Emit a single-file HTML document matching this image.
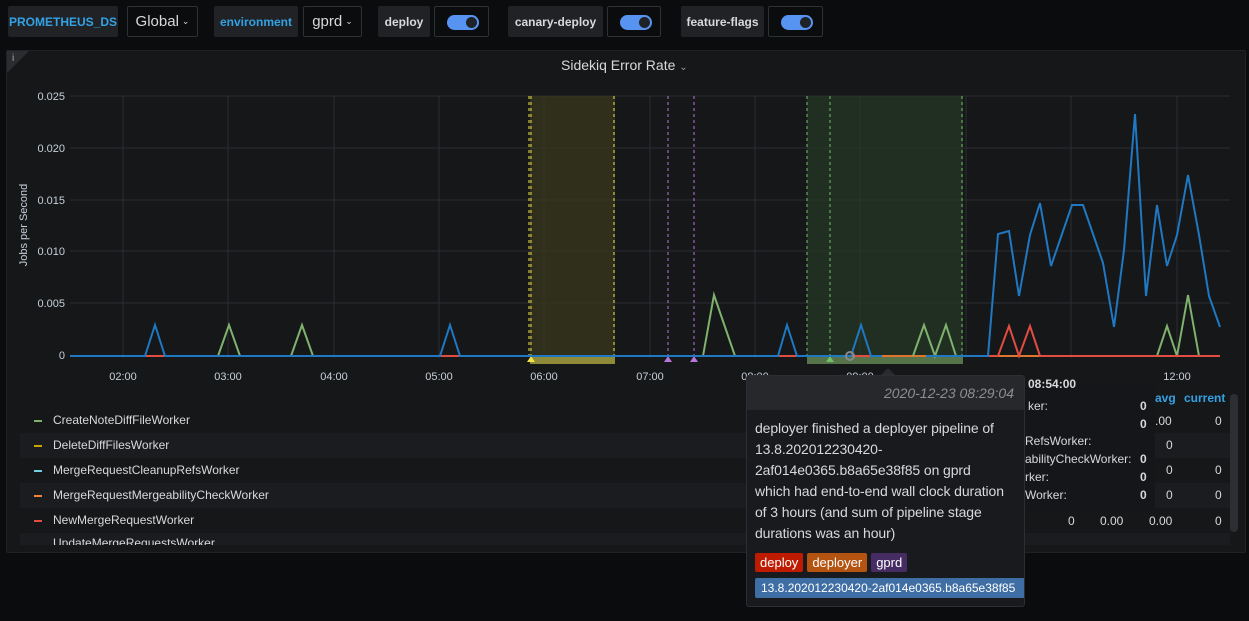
<!DOCTYPE html>
<html><head><meta charset="utf-8"><style>
*{margin:0;padding:0;box-sizing:border-box}
body{width:1249px;height:621px;background:#0b0c0e;font-family:"Liberation Sans",sans-serif;color:#d8d9da;position:relative;overflow:hidden}
.a{position:absolute}
.lbl{background:#202226;border-radius:2px;font-size:13px;display:flex;align-items:center;justify-content:center;height:31px;top:6px}
.dd{border:1px solid #2c3235;border-radius:2px;background:#0b0c0e;font-size:15px;display:flex;align-items:center;justify-content:center;height:31px;top:6px;color:#d8d9da}
.tg{border:1px solid #2c3235;border-radius:2px;background:#0b0c0e;height:31px;top:6px}
.tg i{position:absolute;left:12px;top:8px;width:32px;height:15px;border-radius:8px;background:#5794f2}
.tg i:after{content:"";position:absolute;right:2px;top:2px;width:11px;height:11px;border-radius:50%;background:#1f2227}
.blue{color:#33a2e5}
.lg{font-size:12px;color:#d8d9da;left:20px;width:1210px;height:25px;line-height:25px;padding-left:33px}
.lg b{position:absolute;left:14px;top:12px;width:8px;height:2px}
.tag{display:inline-block;color:#fff;font-size:13px;padding:2px 5px;border-radius:2px;margin-right:4px}
</style></head><body>
<div class="a lbl blue" style="left:8px;width:110px;font-weight:bold;font-size:12px">PROMETHEUS_DS</div>
<div class="a dd" style="left:127px;width:71px">Global <span style="font-size:9px;margin-left:3px">⌄</span></div>
<div class="a lbl blue" style="left:214px;width:84px;font-weight:bold;font-size:12px">environment</div>
<div class="a dd" style="left:303px;width:59px">gprd <span style="font-size:9px;margin-left:3px">⌄</span></div>
<div class="a lbl" style="left:378px;width:52px;font-weight:bold;font-size:12px">deploy</div>
<div class="a tg" style="left:434px;width:55px"><i></i></div>
<div class="a lbl" style="left:508px;width:95px;font-weight:bold;font-size:12px">canary-deploy</div>
<div class="a tg" style="left:607px;width:54px"><i></i></div>
<div class="a lbl" style="left:681px;width:83px;font-weight:bold;font-size:12px">feature-flags</div>
<div class="a tg" style="left:768px;width:55px"><i></i></div>

<div class="a" style="left:6px;top:50px;width:1240px;height:503px;background:#161719;border:1px solid #202226;border-radius:2px"></div>
<div class="a" style="left:7px;top:51px;width:0;height:0;border-top:22px solid #2a2c30;border-right:22px solid transparent"></div>
<div class="a" style="left:12px;top:53px;font-size:10px;color:#aaa">i</div>
<div class="a" style="left:561px;top:57px;font-size:14px;color:#d8d9da">Sidekiq Error Rate <span style="font-size:10px;color:#999">⌄</span></div>

<svg class="a" style="left:0;top:0" width="1249" height="621" font-family="Liberation Sans" font-size="12" fill="#c7d0d9">
<g stroke="#2c2e33" stroke-width="1">
<line x1="70" y1="96" x2="1230" y2="96"/><line x1="70" y1="148" x2="1230" y2="148"/><line x1="70" y1="200" x2="1230" y2="200"/><line x1="70" y1="251" x2="1230" y2="251"/><line x1="70" y1="303" x2="1230" y2="303"/>
<line x1="123" y1="96" x2="123" y2="358"/><line x1="228" y1="96" x2="228" y2="358"/><line x1="334" y1="96" x2="334" y2="358"/><line x1="439" y1="96" x2="439" y2="358"/><line x1="544" y1="96" x2="544" y2="358"/><line x1="650" y1="96" x2="650" y2="358"/><line x1="755" y1="96" x2="755" y2="358"/><line x1="860" y1="96" x2="860" y2="358"/><line x1="966" y1="96" x2="966" y2="358"/><line x1="1071" y1="96" x2="1071" y2="358"/><line x1="1177" y1="96" x2="1177" y2="358"/>
</g>
<g text-anchor="end" font-size="11"><text x="65" y="100">0.025</text><text x="65" y="152">0.020</text><text x="65" y="204">0.015</text><text x="65" y="255">0.010</text><text x="65" y="307">0.005</text><text x="65" y="359">0</text></g>
<text x="27" y="225" font-size="11" transform="rotate(-90 27 225)" text-anchor="middle">Jobs per Second</text>
<g text-anchor="middle" font-size="11"><text x="123" y="380">02:00</text><text x="228" y="380">03:00</text><text x="334" y="380">04:00</text><text x="439" y="380">05:00</text><text x="544" y="380">06:00</text><text x="650" y="380">07:00</text><text x="755" y="380">08:00</text><text x="860" y="380">09:00</text><text x="1177" y="380">12:00</text></g>
<rect x="530" y="96" width="85" height="262" fill="#3a3a1e" opacity="0.7"/>
<rect x="530" y="356" width="85" height="8" fill="#8f8a38"/>
<rect x="807" y="96" width="156" height="262" fill="#263826" opacity="0.75"/>
<rect x="807" y="356" width="156" height="8" fill="#56734a"/>
<g stroke-dasharray="3,3" stroke-width="1">
<line x1="529" y1="96" x2="529" y2="356" stroke="#f2e34a"/><line x1="531" y1="96" x2="531" y2="356" stroke="#f2e34a"/><line x1="614" y1="96" x2="614" y2="356" stroke="#f2e34a"/>
<line x1="668" y1="96" x2="668" y2="356" stroke="#b877d9"/><line x1="694" y1="96" x2="694" y2="356" stroke="#b877d9"/>
<line x1="807" y1="96" x2="807" y2="356" stroke="#73bf69"/><line x1="830" y1="96" x2="830" y2="356" stroke="#73bf69"/><line x1="962" y1="96" x2="962" y2="356" stroke="#73bf69"/>
</g>
<polygon points="531,356 527,362 535,362" fill="#f2e34a"/>
<polygon points="668,356 664,362 672,362" fill="#b877d9"/><polygon points="694,356 690,362 698,362" fill="#b877d9"/>
<polygon points="830,356 826,362 834,362" fill="#73bf69"/>
<g fill="none" stroke-width="2" stroke-linejoin="miter">
<polyline stroke="#e0752d" points="70,356 1220,356"/>
<line x1="145" y1="356" x2="165" y2="356" stroke="#e24d42"/><line x1="440" y1="356" x2="460" y2="356" stroke="#e24d42"/><line x1="778" y1="356" x2="797" y2="356" stroke="#e24d42"/><line x1="855" y1="356" x2="870" y2="356" stroke="#e24d42"/>
<polyline stroke="#7eb26d" points="218,356 229,325 240,356"/>
<polyline stroke="#7eb26d" points="291,356 302,325 313,356"/>
<polyline stroke="#7eb26d" points="703,356 714,295 735,356"/>
<polyline stroke="#7eb26d" points="913,356 924,325 935,356 946,325 956,356"/>
<polyline stroke="#7eb26d" points="1157,356 1167,326 1177,356 1188,295 1199,356"/>
<polyline stroke="#e24d42" points="970,356 998,356 1009,326 1019,356 1030,326 1040,356 1220,356"/>
<polyline stroke="#1f78c1" points="70,356 145,356 155,325 165,356 440,356 450,325 460,356 778,356 787,325 797,356 851,356 861,325 871,356 882,356"/>
<polyline stroke="#1f78c1" points="926,356 988,356 998,234 1009,231 1019,296 1030,235 1040,203 1051,266 1072,205 1083,205 1103,263 1114,327 1124,250 1135,114 1146,296 1157,205 1167,266 1177,235 1188,175 1199,235 1209,296 1220,327"/>
</g>
<circle cx="850" cy="356" r="4" fill="none" stroke="#888" stroke-width="2"/>
</svg>

<div class="a lg" style="top:408px"><b style="background:#7eb26d"></b>CreateNoteDiffFileWorker</div>
<div class="a lg" style="top:433px;background:#1b1c20"><b style="background:#cca300"></b>DeleteDiffFilesWorker</div>
<div class="a lg" style="top:458px"><b style="background:#6ed0e0"></b>MergeRequestCleanupRefsWorker</div>
<div class="a lg" style="top:483px;background:#1b1c20"><b style="background:#ef843c"></b>MergeRequestMergeabilityCheckWorker</div>
<div class="a lg" style="top:508px"><b style="background:#e24d42"></b>NewMergeRequestWorker</div>
<div class="a lg" style="top:533px;height:12px;overflow:hidden;background:#1b1c20;line-height:20px">UpdateMergeRequestsWorker</div>

<div class="a" style="left:1230px;top:394px;width:8px;height:138px;background:#2c2e33;border-radius:4px"></div>
<div class="a" style="left:1015px;top:384px;width:140px;height:128px;background:#141619"></div>
<div class="a" style="left:1028px;top:377px;font-size:12px;font-weight:bold">08:54:00</div>
<div class="a" style="left:1028px;top:399px;font-size:12px">ker:</div><div class="a" style="left:1140px;top:399px;font-size:12px;font-weight:bold">0</div>
<div class="a" style="left:1140px;top:417px;font-size:12px;font-weight:bold">0</div>
<div class="a" style="left:1025px;top:434px;font-size:12px">RefsWorker:</div>
<div class="a" style="left:1025px;top:452px;font-size:12px">abilityCheckWorker:</div><div class="a" style="left:1140px;top:452px;font-size:12px;font-weight:bold">0</div>
<div class="a" style="left:1025px;top:470px;font-size:12px">rker:</div><div class="a" style="left:1140px;top:470px;font-size:12px;font-weight:bold">0</div>
<div class="a" style="left:1025px;top:488px;font-size:12px">Worker:</div><div class="a" style="left:1140px;top:488px;font-size:12px;font-weight:bold">0</div>
<div class="a blue" style="left:1155px;top:391px;font-size:12px;font-weight:bold">avg</div>
<div class="a blue" style="left:1184px;top:391px;font-size:12px;font-weight:bold">current</div>
<div class="a" style="left:1155px;top:414px;font-size:12px">.00</div><div class="a" style="left:1215px;top:414px;font-size:12px">0</div>
<div class="a" style="left:1166px;top:438px;font-size:12px">0</div>
<div class="a" style="left:1166px;top:463px;font-size:12px">0</div><div class="a" style="left:1215px;top:463px;font-size:12px">0</div>
<div class="a" style="left:1166px;top:488px;font-size:12px">0</div><div class="a" style="left:1215px;top:488px;font-size:12px">0</div>
<div class="a" style="left:1068px;top:514px;font-size:12px">0</div><div class="a" style="left:1100px;top:514px;font-size:12px">0.00</div><div class="a" style="left:1149px;top:514px;font-size:12px">0.00</div><div class="a" style="left:1215px;top:514px;font-size:12px">0</div>

<div class="a" style="left:880px;top:368px;width:0;height:0;border-left:8px solid transparent;border-right:8px solid transparent;border-bottom:8px solid #2a2c30"></div>
<div class="a" style="left:746px;top:375px;width:279px;height:232px;background:#181a1e;border:1px solid #2c2e33;border-radius:3px;overflow:hidden">
<div style="height:34px;background:#26282c;text-align:right;padding:9px 10px 0 0;font-size:14px;font-style:italic;color:#8e8e8e">2020-12-23 08:29:04</div>
<div style="padding:8px 18px 0 8px;font-size:14px;line-height:21px;color:#d8d9da;letter-spacing:-0.1px">deployer finished a deployer pipeline of 13.8.202012230420-2af014e0365.b8a65e38f85 on gprd which had end-to-end wall clock duration of 3 hours (and sum of pipeline stage durations was an hour)</div>
<div style="padding:9px 0 0 8px"><span class="tag" style="background:#bf1b00">deploy</span><span class="tag" style="background:#b55311">deployer</span><span class="tag" style="background:#452d63">gprd</span></div>
<div style="margin:6px 0 0 8px;width:270px;background:#3f6ea5;color:#fff;font-size:12px;padding:3px 6px;border-radius:2px">13.8.202012230420-2af014e0365.b8a65e38f85</div>
</div>
</body></html>
